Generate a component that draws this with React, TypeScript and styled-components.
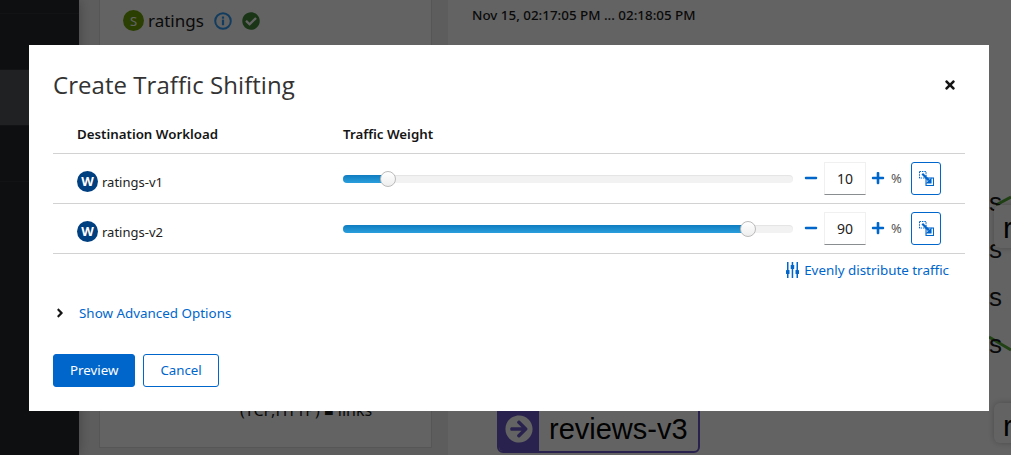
import React from "react";
import styled, { createGlobalStyle } from "styled-components";
import { FaTimes, FaMinus, FaPlus, FaAngleRight, FaCheckCircle, FaArrowCircleRight } from "react-icons/fa";

const Global = createGlobalStyle`
  html, body { margin: 0; padding: 0; background: #f0f0f0; }
  * { box-sizing: border-box; }
  body { font-family: "Noto Sans", "Liberation Sans", sans-serif; color: #151515; }
`;

const Page = styled.div`
  position: relative;
  width: 1011px;
  height: 455px;
  overflow: hidden;
  display: flex;
  background: #f0f0f0;
`;

const Sidebar = styled.nav`
  position: relative;
  width: 79px;
  flex: none;
  background: #212427;
  display: flex;
  flex-direction: column;
  box-shadow: 0 0 12px rgba(0, 0, 0, 0.3);
`;

const NavItem = styled.div<{ $h: number; $active?: boolean }>`
  height: ${(p) => p.$h}px;
  flex: none;
  background: ${(p) => (p.$active ? "#4f5255" : "#212427")};
  border-bottom: 1px solid #2b2e31;
`;

const Main = styled.main`
  flex: 1;
  display: flex;
  gap: 16px;
  padding: 0 0 0 20px;
`;

const SideCard = styled.section`
  width: 333px;
  flex: none;
  margin-bottom: 7px;
  background: #fff;
  border: 1px solid #dcdcdc;
  border-top: 0;
  padding: 10px 23px 29px;
  display: flex;
  flex-direction: column;
`;

const ServiceHead = styled.div`
  display: flex;
  align-items: center;
  height: 21px;
  font-size: 17px;
  color: #151515;
`;

const ServiceBadge = styled.span`
  width: 21px;
  height: 21px;
  border-radius: 50%;
  background: #6ca100;
  color: #fff;
  font-size: 13px;
  display: flex;
  align-items: center;
  justify-content: center;
  margin-right: 4px;
`;

const ServiceName = styled.span`
  margin-right: 10px;
`;

const StatusCheck = styled(FaCheckCircle)`
  color: #3e8635;
  font-size: 18px;
  margin-left: 10px;
`;

const LinkSummary = styled.div`
  margin: auto 0 0 117px;
  font-size: 16px;
  line-height: 16px;
  color: #151515;
  white-space: nowrap;
`;

const GraphPanel = styled.section`
  position: relative;
  flex: 1;
  background: #fff;
  overflow: hidden;
`;

const TimeRange = styled.div`
  position: absolute;
  left: 24px;
  top: 6px;
  font-size: 13.4px;
  font-weight: 500;
  color: #151515;
  white-space: nowrap;
`;

const EdgeLabel = styled.span<{ $x: number; $y: number }>`
  position: absolute;
  left: ${(p) => p.$x}px;
  top: ${(p) => p.$y}px;
  font: 26px/30px "Liberation Sans", sans-serif;
  color: #151515;
`;

const GraphNode = styled.div`
  position: absolute;
  left: 49px;
  top: 385px;
  width: 203px;
  height: 68px;
  display: flex;
  align-items: flex-end;
  background: #fff;
  border: 2px solid #6a56c8;
  border-radius: 6px;
  overflow: hidden;
  font: 29px/1 "Liberation Sans", sans-serif;
  color: #000;
`;

const NodeStripe = styled.span`
  width: 41px;
  height: 100%;
  flex: none;
  background: #6a56c8;
  color: #fff;
  display: flex;
  align-items: flex-end;
  justify-content: center;
  padding-bottom: 8px;
  font-size: 28px;
  margin-left: -1px;
`;

const NodeName = styled.span`
  margin: 0 0 7px 10px;
`;

const EdgeNode = styled.div<{ $y: number; $h: number }>`
  position: absolute;
  left: 546px;
  top: ${(p) => p.$y}px;
  width: 60px;
  height: ${(p) => p.$h}px;
  background: #fff;
  border-radius: 6px;
  box-shadow: 0 0 6px rgba(0, 0, 0, 0.25);
  font: 30px/30px "Liberation Sans", sans-serif;
  color: #000;
  padding: 8px 0 0 9px;
`;

const Edges = styled.svg`
  position: absolute;
  inset: 0;
  width: 100%;
  height: 100%;
`;

const Backdrop = styled.div`
  position: absolute;
  inset: 0;
  background: rgba(3, 3, 3, 0.62);
  display: flex;
  align-items: center;
  justify-content: center;
  padding-left: 7px;
`;

const Modal = styled.div`
  position: relative;
  width: 960px;
  height: 366px;
  background: #fff;
  padding: 24px;
  display: flex;
  flex-direction: column;
`;

const Title = styled.h1`
  margin: 0;
  height: 32px;
  font-size: 24px;
  line-height: 32px;
  font-weight: 400;
  color: #333;
  font-family: "Open Sans", sans-serif;
  letter-spacing: 0.05px;
`;

const CloseButton = styled.button`
  position: absolute;
  top: 33px;
  right: 32px;
  border: 0;
  background: none;
  padding: 0;
  color: #151515;
  font-size: 14px;
  line-height: 1;
  display: flex;
`;

const Table = styled.div`
  margin: 19px 12px 0 0;
  display: flex;
  flex-direction: column;
  width: 912px;
`;

const HeadRow = styled.div`
  display: grid;
  grid-template-columns: 266px 1fr;
  height: 34px;
  padding: 5px 0 0 24px;
  align-items: start;
  border-bottom: 1px solid #d2d2d2;
  font-size: 13.3px;
  line-height: 18px;
  font-weight: 600;
  color: #151515;
`;

const Row = styled.div`
  display: grid;
  grid-template-columns: 266px 1fr;
  height: 50px;
  padding-left: 24px;
  align-items: center;
  border-bottom: 1px solid #d2d2d2;
`;

const Workload = styled.div`
  display: flex;
  align-items: center;
  gap: 4px;
  font-size: 13px;
  color: #222;
  padding-top: 7px;
`;

const WBadge = styled.span`
  width: 21px;
  height: 21px;
  border-radius: 50%;
  background: #004080;
  color: #fff;
  font: bold 13px/21px "Noto Sans", sans-serif;
  text-align: center;
`;

const Controls = styled.div`
  display: flex;
  align-items: center;
`;

const Track = styled.div`
  position: relative;
  width: 450px;
  height: 8px;
  margin-top: 2px;
  border-radius: 4px;
  background: #f2f2f2;
  box-shadow: inset 0 1px 1px rgba(0, 0, 0, 0.06);
`;

const Fill = styled.div`
  height: 100%;
  border-radius: 4px;
  background: linear-gradient(#0f7cc0, #2a9fdc);
`;

const Thumb = styled.div`
  position: absolute;
  top: -4px;
  width: 16px;
  height: 16px;
  margin-left: -8px;
  border-radius: 50%;
  background: linear-gradient(#fff, #eee);
  border: 1px solid #bbb;
`;

const IconBtn = styled.button`
  border: 0;
  background: none;
  padding: 0;
  width: 14px;
  height: 14px;
  color: #06c;
  font-size: 14px;
  display: flex;
  align-items: center;
  justify-content: center;
`;

const MinusBtn = styled(IconBtn)`
  margin-left: 11px;
`;

const Field = styled.div`
  width: 42px;
  height: 33px;
  margin: 0 5px 0 6px;
  border: 1px solid #f0f0f0;
  border-bottom-color: #8a8d90;
  display: flex;
  align-items: center;
  justify-content: center;
  font-size: 14px;
  color: #222;
`;

const Percent = styled.span`
  font-size: 13px;
  color: #555;
  margin-left: 6px;
  width: 20px;
`;

const MirrorBtn = styled.button`
  width: 30px;
  height: 33px;
  border: 1px solid #06c;
  border-radius: 3px;
  background: #fff;
  padding: 0;
  display: flex;
  align-items: center;
  justify-content: center;
`;

const DistributeRow = styled.div`
  display: flex;
  justify-content: flex-end;
  align-items: center;
  gap: 5px;
  width: 896px;
  height: 32px;
  color: #06c;
  font-size: 13.4px;
`;

const Expander = styled.div`
  display: flex;
  align-items: center;
  margin-top: 11px;
  height: 32px;
  font-size: 13.4px;
  color: #06c;
`;

const Chevron = styled(FaAngleRight)`
  color: #151515;
  font-size: 14px;
  width: 14px;
  margin-right: 12px;
`;

const Footer = styled.div`
  display: flex;
  gap: 8px;
  margin-top: 25px;
`;

const ActionButton = styled.button<{ $primary?: boolean }>`
  height: 33px;
  padding: 0 16px;
  border-radius: 3px;
  border: 1px solid #06c;
  background: ${(p) => (p.$primary ? "#06c" : "#fff")};
  color: ${(p) => (p.$primary ? "#fff" : "#06c")};
  font: 13.3px "Noto Sans", sans-serif;
`;

const MirrorIcon = () => (
  <svg width="15" height="15" viewBox="0 0 16 16" fill="none">
    <rect x="0.5" y="0.5" width="7" height="7" stroke="#06c" strokeWidth="1.2" strokeDasharray="1.6 1" />
    <rect x="7.5" y="7.5" width="8" height="8" stroke="#06c" strokeWidth="1.2" />
    <path d="M3.5 3 L10.5 10" stroke="#06c" strokeWidth="2.4" />
    <path d="M13.4 7 V13.4 H7 Z" fill="#06c" />
  </svg>
);

const SlidersIcon = () => (
  <svg width="13" height="16" viewBox="0 0 13 16" fill="#06c">
    <rect x="1" y="0" width="1.5" height="16" />
    <rect x="5.7" y="0" width="1.5" height="16" />
    <rect x="10.5" y="0" width="1.5" height="16" />
    <rect x="0" y="8" width="3.5" height="4" rx="0.6" />
    <rect x="4.7" y="3" width="3.5" height="4" rx="0.6" />
    <rect x="9.5" y="8" width="3.5" height="4" rx="0.6" />
  </svg>
);

const InfoIcon = () => (
  <svg width="18" height="18" viewBox="0 0 18 18" fill="none">
    <circle cx="9" cy="9" r="7.8" stroke="#2b9af3" strokeWidth="2" />
    <rect x="7.9" y="7.6" width="2.2" height="5.6" fill="#2b9af3" />
    <rect x="7.9" y="4.5" width="2.2" height="2.2" fill="#2b9af3" />
  </svg>
);

const rows = [
  { name: "ratings-v1", value: 10 },
  { name: "ratings-v2", value: 90 },
];

export default function App() {
  return (
    <Page>
      <Global />
      <Sidebar>
        <NavItem $h={14} />
        <NavItem $h={56} />
        <NavItem $h={56} $active />
        <NavItem $h={56} />
      </Sidebar>
      <Main>
        <SideCard>
          <ServiceHead>
            <ServiceBadge>S</ServiceBadge>
            <ServiceName>ratings</ServiceName>
            <InfoIcon />
            <StatusCheck />
          </ServiceHead>
          <LinkSummary>(TCP,HTTP) ■ links</LinkSummary>
        </SideCard>
        <GraphPanel>
          <TimeRange>Nov 15, 02:17:05 PM ... 02:18:05 PM</TimeRange>
          <Edges viewBox="0 0 563 455">
            <path d="M548 205 L563 197" stroke="#50a832" strokeWidth="3" />
            <path d="M541 337 L563 350" stroke="#50a832" strokeWidth="3" />
          </Edges>
          <EdgeLabel $x={541} $y={187}>s</EdgeLabel>
          <EdgeLabel $x={541} $y={234}>s</EdgeLabel>
          <EdgeLabel $x={541} $y={282}>s</EdgeLabel>
          <EdgeLabel $x={541} $y={329}>s</EdgeLabel>
          <EdgeNode $y={205} $h={43}>r</EdgeNode>
          <EdgeNode $y={403} $h={40}>r</EdgeNode>
          <GraphNode>
            <NodeStripe><FaArrowCircleRight /></NodeStripe>
            <NodeName>reviews-v3</NodeName>
          </GraphNode>
        </GraphPanel>
      </Main>
      <Backdrop>
        <Modal>
          <Title>Create Traffic Shifting</Title>
          <CloseButton><FaTimes /></CloseButton>
          <Table>
            <HeadRow>
              <span>Destination Workload</span>
              <span>Traffic Weight</span>
            </HeadRow>
            {rows.map((r) => (
              <Row key={r.name}>
                <Workload>
                  <WBadge>W</WBadge>
                  {r.name}
                </Workload>
                <Controls>
                  <Track>
                    <Fill style={{ width: `${r.value}%` }} />
                    <Thumb style={{ left: `${r.value}%` }} />
                  </Track>
                  <MinusBtn><FaMinus /></MinusBtn>
                  <Field>{r.value}</Field>
                  <IconBtn><FaPlus /></IconBtn>
                  <Percent>%</Percent>
                  <MirrorBtn><MirrorIcon /></MirrorBtn>
                </Controls>
              </Row>
            ))}
          </Table>
          <DistributeRow>
            <SlidersIcon />
            <span>Evenly distribute traffic</span>
          </DistributeRow>
          <Expander>
            <Chevron />
            Show Advanced Options
          </Expander>
          <Footer>
            <ActionButton $primary>Preview</ActionButton>
            <ActionButton>Cancel</ActionButton>
          </Footer>
        </Modal>
      </Backdrop>
    </Page>
  );
}
